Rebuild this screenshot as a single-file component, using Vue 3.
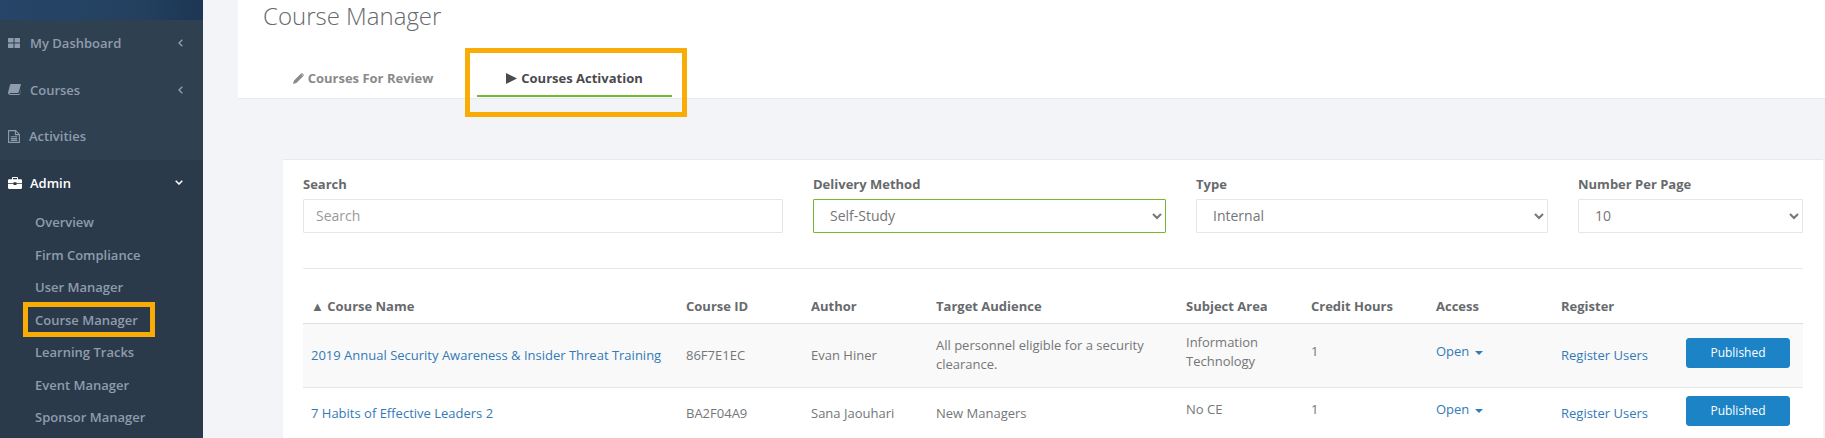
<script setup>
const navItems = [
  { label: 'My Dashboard', icon: 'grid', chevron: true },
  { label: 'Courses', icon: 'book', chevron: true },
  { label: 'Activities', icon: 'file', chevron: false, tight: true },
]
const subItems = ['Overview', 'Firm Compliance', 'User Manager', 'Course Manager', 'Learning Tracks', 'Event Manager', 'Sponsor Manager']
const columns = ['Course ID', 'Author', 'Target Audience', 'Subject Area', 'Credit Hours', 'Access', 'Register', '']
const rows = [
  { name: '2019 Annual Security Awareness & Insider Threat Training', id: '86F7E1EC', author: 'Evan Hiner', audience: 'All personnel eligible for a security clearance.', subject: 'Information Technology', hours: '1' },
  { name: '7 Habits of Effective Leaders 2', id: 'BA2F04A9', author: 'Sana Jaouhari', audience: 'New Managers', subject: 'No CE', hours: '1' },
]
</script>

<template>
  <div class="page">
    <aside class="sidebar">
      <div class="banner"></div>
      <nav>
        <a v-for="item in navItems" :key="item.label" class="nav-item" :class="{ tight: item.tight }">
          <span class="nav-icon">
            <svg v-if="item.icon === 'grid'" width="12" height="10" viewBox="0 0 12 10" fill="currentColor">
              <rect x="0" y="0" width="5.5" height="4.5" rx=".5" />
              <rect x="6.5" y="0" width="5.5" height="4.5" rx=".5" />
              <rect x="0" y="5.5" width="5.5" height="4.5" rx=".5" />
              <rect x="6.5" y="5.5" width="5.5" height="4.5" rx=".5" />
            </svg>
            <svg v-else-if="item.icon === 'book'" width="13" height="11" viewBox="0 0 13 11" fill="currentColor">
              <path d="M3 0h9.200c.6 0 .8.400.6 1l-2.100 7.200c-.2.500-.5.800-1 .8H2.200c-.6 0-.8.400-.6.700.1.300.4.300.8.300h8.700c.3 0 .6-.2.700-.5l2-6.700.1 1-2 6.400c-.2.500-.6.800-1.100.8H2.300C1.200 11 .2 10.100 0 9c0-.4 0-.7.2-1.200L2 1C2.200.400 2.500 0 3 0z" />
            </svg>
            <svg v-else width="12" height="13" viewBox="0 0 12 13" fill="none" stroke="currentColor" stroke-width="1.100">
              <path d="M.6.6h7l3.800 3.800v8H.6z" />
              <path d="M7.400.8v3.800h3.800M2.800 6.800h6.400M2.800 8.600h6.400M2.800 10.400h6.400" />
            </svg>
          </span>
          <span class="nav-label">{{ item.label }}</span>
          <svg v-if="item.chevron" class="chev-left" width="5" height="8" viewBox="0 0 5 8" fill="none" stroke="currentColor" stroke-width="1.400">
            <path d="M4.300.7L1 4l3.300 3.300" />
          </svg>
        </a>
        <div class="admin">
          <a class="nav-item admin-head">
            <span class="nav-icon">
              <svg width="14" height="12" viewBox="0 0 14 12" fill="currentColor">
                <path d="M5 0h4c.6 0 1 .4 1 1v1.200h2.800c.7 0 1.200.5 1.200 1.200V6H8.500v-.8h-3V6H0V3.400c0-.7.500-1.200 1.200-1.200H4V1c0-.6.4-1 1-1zm0 1v1.200h4V1H5z" fill-rule="evenodd" />
                <path d="M0 6.800h5.500V8h3V6.800H14v4c0 .7-.5 1.200-1.200 1.200H1.200C.5 12 0 11.500 0 10.800z" />
              </svg>
            </span>
            <span class="nav-label">Admin</span>
            <svg class="chev-down" width="8" height="5" viewBox="0 0 8 5" fill="none" stroke="currentColor" stroke-width="1.500">
              <path d="M.7.7L4 4 7.300.7" />
            </svg>
          </a>
          <a v-for="sub in subItems" :key="sub" class="sub-item">{{ sub }}</a>
        </div>
      </nav>
      <div class="mark mark-nav"></div>
    </aside>

    <main class="main">
      <header class="head">
        <h1 class="title">Course Manager</h1>
        <div class="tabs">
          <a class="tab">
            <svg width="11" height="11" viewBox="0 0 11 11" fill="currentColor">
              <path d="M7.800.8L10.200 3.200 3.400 10 0 11l1-3.400zM8.500.1c.2-.1.400-.1.600 0l1.800 1.800c.1.200.1.400 0 .6l-.4.400L8.100.5z" />
            </svg>
            Courses For Review
          </a>
          <a class="tab active">
            <svg width="11" height="11" viewBox="0 0 11 11" fill="currentColor"><path d="M0 0l11 5.500L0 11z" /></svg>
            Courses Activation
          </a>
        </div>
        <div class="mark mark-tab"></div>
      </header>

      <section class="card">
        <div class="filters">
          <label class="field f-search">
            <span>Search</span>
            <input class="control" placeholder="Search" />
          </label>
          <label class="field f-method">
            <span>Delivery Method</span>
            <select class="control focus"><option>Self-Study</option></select>
          </label>
          <label class="field f-type">
            <span>Type</span>
            <select class="control"><option>Internal</option></select>
          </label>
          <label class="field f-count">
            <span>Number Per Page</span>
            <select class="control"><option>10</option></select>
          </label>
        </div>
        <hr class="rule" />
        <table class="grid">
          <colgroup>
            <col style="width:375px" /><col style="width:125px" /><col style="width:125px" /><col style="width:250px" />
            <col style="width:125px" /><col style="width:125px" /><col style="width:125px" /><col style="width:125px" /><col style="width:125px" />
          </colgroup>
          <thead>
            <tr>
              <th><span class="sort">▲</span> Course Name</th>
              <th v-for="col in columns" :key="col">{{ col }}</th>
            </tr>
          </thead>
          <tbody>
            <tr v-for="row in rows" :key="row.id">
              <td><a class="link">{{ row.name }}</a></td>
              <td>{{ row.id }}</td>
              <td>{{ row.author }}</td>
              <td>{{ row.audience }}</td>
              <td><p>{{ row.subject }}</p></td>
              <td><p>{{ row.hours }}</p></td>
              <td><p><a class="link">Open <i class="caret"></i></a></p></td>
              <td><a class="link">Register Users</a></td>
              <td><button class="publish">Published</button></td>
            </tr>
          </tbody>
        </table>
      </section>
    </main>
  </div>
</template>

<style>
html, body { margin: 0; overflow: hidden; }
</style>

<style scoped>
.page {
  display: flex;
  height: 438px;
  overflow: hidden;
  font-family: "Open Sans", sans-serif;
  font-size: 13px;
  color: #676a6c;
  background: #f3f4f8;
}
.sidebar {
  position: relative;
  flex: 0 0 203px;
  background: #2f4050;
  color: #8f9cae;
  font-weight: 600;
}
.banner {
  height: 20px;
  background: linear-gradient(100deg, #264568 0%, #23405f 70%, #1c3653 100%);
}
.nav-item {
  display: flex;
  align-items: center;
  box-sizing: border-box;
  height: 46.7px;
  padding: 0 0 1px 8px;
}
.nav-icon {
  display: flex;
  align-items: center;
  width: 22px;
  height: 14px;
}
.tight .nav-label { margin-left: -1px; }
.chev-left { position: absolute; left: 178px; }
.admin { background: #2b3a4a; padding-bottom: 20px; }
.admin-head { color: #fff; }
.chev-down { position: absolute; left: 175px; }
.sub-item {
  display: flex;
  align-items: center;
  box-sizing: border-box;
  height: 32.5px;
  padding: 0 0 2px 35px;
}
.mark {
  position: absolute;
  box-sizing: border-box;
  border: 5px solid #f9ab06;
  pointer-events: none;
}
.mark-nav { left: 23px; top: 302px; width: 132px; height: 35px; }
.main { flex: 1; min-width: 0; }
.head {
  position: relative;
  margin-left: 35px;
  height: 99px;
  box-sizing: border-box;
  background: #fff;
  border-bottom: 1px solid #e7eaec;
}
.title {
  margin: 0;
  padding: 0 0 0 25px;
  font-size: 24px;
  font-weight: 300;
  line-height: 32px;
  color: #676a6c;
}
.tabs {
  display: flex;
  gap: 15px;
  margin-top: 14px;
  padding-left: 26px;
}
.tab {
  display: flex;
  align-items: center;
  justify-content: center;
  gap: 4px;
  box-sizing: border-box;
  width: 198px;
  height: 51px;
  padding-top: 13px;
  font-weight: 700;
  color: #8a8a8a;
}
.tab.active {
  width: 195px;
  padding-top: 15px;
  color: #4a4a4f;
  border-bottom: 2px solid #72bb2f;
}
.mark-tab { left: 227px; top: 48px; width: 222px; height: 69px; }
.card {
  margin: 60px 2px 0 80px;
  padding: 15px 20px 0;
  background: #fff;
  border-top: 1px solid #e7eaec;
}
.filters { display: flex; gap: 30px; }
.field {
  display: flex;
  flex-direction: column;
  gap: 6px;
  font-weight: 700;
}
.field > span { line-height: 18px; }
.f-search { flex: 0 0 480px; }
.f-method { flex: 0 0 353px; }
.f-type { flex: 0 0 352px; }
.f-count { flex: 0 0 225px; }
.control {
  box-sizing: border-box;
  height: 34px;
  width: 100%;
  padding: 0 12px 1px;
  border: 1px solid #e5e6e7;
  border-radius: 1px;
  outline: none;
  background: #fff;
  color: #747678;
  font: 400 14px "Open Sans", sans-serif;
}
.control::placeholder { color: #999; }
.control.focus { border-color: #72bb2f; }
.rule {
  margin: 35px 0 20px;
  border: 0;
  border-top: 1px solid #e7eaec;
}
.grid {
  width: 1500px;
  table-layout: fixed;
  border-collapse: collapse;
  line-height: 19px;
}
.grid th {
  padding: 8px 8px 6.500px;
  text-align: left;
  font-weight: 700;
  border-bottom: 1px solid #ddd;
}
.grid td {
  padding: 8px;
  vertical-align: middle;
  border-bottom: 1px solid #e7e7e7;
  font-weight: 400;
  color: #747678;
}
.grid tbody tr:first-child { height: 64px; background: #f9f9f9; }
.grid p { margin: 0 0 7px; }
.link { color: #337ab7; }
.caret {
  display: inline-block;
  margin-left: 2px;
  vertical-align: middle;
  border-top: 4px solid #337ab7;
  border-left: 4px solid transparent;
  border-right: 4px solid transparent;
}
.publish {
  display: block;
  width: 104px;
  height: 30px;
  margin: 0 0 5px;
  padding: 0;
  border: 1px solid #1c84c6;
  border-radius: 3px;
  background: #1c84c6;
  color: #fff;
  font: 400 12px "Open Sans", sans-serif;
}
</style>
